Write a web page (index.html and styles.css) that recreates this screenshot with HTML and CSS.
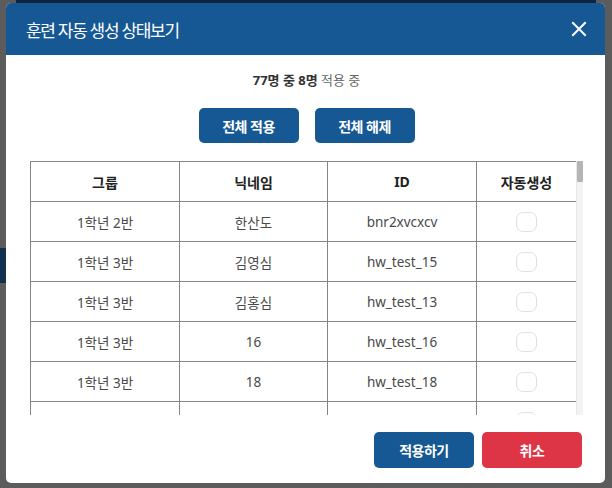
FILE: index.html
```html
<!DOCTYPE html>
<html lang="ko">
<head>
<meta charset="utf-8">
<title>훈련 자동 생성 상태보기</title>
<link rel="stylesheet" href="styles.css">
</head>
<body>
<div class="page">
  <div class="page-top"></div>
  <div class="page-side"></div>
</div>
<div class="modal">
  <div class="modal-header">
    <h1 class="modal-title">훈련 자동 생성 상태보기</h1>
    <button class="close" aria-label="닫기">
      <svg width="16" height="16" viewBox="0 0 16 16"><path d="M2 2 L14 14 M14 2 L2 14" stroke="#fff" stroke-width="2" stroke-linecap="square" fill="none"/></svg>
    </button>
  </div>
  <div class="modal-body">
    <p class="summary"><b>77명 중 8명</b> 적용 중</p>
    <div class="actions">
      <button class="btn btn-blue">전체 적용</button>
      <button class="btn btn-blue">전체 해제</button>
    </div>
    <div class="table-area">
      <div class="table-wrap">
        <table class="grid">
          <colgroup>
            <col class="c-group"><col class="c-nick"><col class="c-id"><col class="c-auto">
          </colgroup>
          <thead>
            <tr><th>그룹</th><th>닉네임</th><th>ID</th><th>자동생성</th></tr>
          </thead>
          <tbody>
            <tr><td>1학년 2반</td><td>한산도</td><td>bnr2xvcxcv</td><td><span class="cb"></span></td></tr>
            <tr><td>1학년 3반</td><td>김영심</td><td>hw_test_15</td><td><span class="cb"></span></td></tr>
            <tr><td>1학년 3반</td><td>김홍심</td><td>hw_test_13</td><td><span class="cb"></span></td></tr>
            <tr><td>1학년 3반</td><td>16</td><td>hw_test_16</td><td><span class="cb"></span></td></tr>
            <tr><td>1학년 3반</td><td>18</td><td>hw_test_18</td><td><span class="cb"></span></td></tr>
            <tr class="partial"><td>1학년 3반</td><td>19</td><td>hw_test_19</td><td><span class="cb"></span></td></tr>
          </tbody>
        </table>
      </div>
      <div class="scrollbar"><div class="thumb"></div></div>
    </div>
  </div>
  <div class="modal-footer">
    <button class="btn btn-blue">적용하기</button>
    <button class="btn btn-red">취소</button>
  </div>
</div>
</body>
</html>
```
FILE: styles.css
```css
* { box-sizing: border-box; }
html, body { margin: 0; padding: 0; }
body {
  width: 612px;
  height: 488px;
  overflow: hidden;
  background: #5c5c5c;
  font-family: "Noto Sans", "Noto Sans CJK KR", sans-serif;
  position: relative;
}
.page { height: 488px; display: flex; flex-direction: column; }
.page-top { height: 14px; margin: 0 16px; background: #0e2440; }
.page-side { margin-top: 234px; width: 8px; height: 35px; background: #12304f; }

.modal {
  position: absolute;
  left: 6px;
  top: 3px;
  width: 599px;
  height: 480px;
  background: #fff;
  border-radius: 5px;
  overflow: hidden;
  display: flex;
  flex-direction: column;
}
.modal-header {
  height: 52px;
  flex: none;
  background: #155894;
  display: flex;
  align-items: center;
  justify-content: space-between;
  padding: 0 18px 0 20px;
}
.modal-title {
  margin: 0;
  color: #fff;
  font-size: 17px;
  font-weight: 400;
  letter-spacing: -1.3px;
}
.close {
  border: 0;
  background: none;
  padding: 0;
  width: 16px;
  height: 16px;
  display: flex;
}
.modal-body {
  flex: 1;
  display: flex;
  flex-direction: column;
  padding: 16px 22px 0 24px;
  min-height: 0;
}
.summary {
  margin: 0;
  text-align: center;
  font-size: 13px;
  line-height: 19px;
  color: #666;
}
.summary b { color: #333; font-weight: 700; }
.actions {
  margin-top: 18px;
  display: flex;
  justify-content: center;
  gap: 16px;
}
.btn {
  width: 100px;
  height: 35px;
  border: 0;
  border-radius: 5px;
  color: #fff;
  font-family: inherit;
  font-size: 14px;
  font-weight: 700;
  letter-spacing: -0.5px;
  padding: 0;
}
.btn-blue { background: #155894; }
.btn-red { background: #dd3546; }

.table-area {
  margin-top: 18px;
  height: 254px;
  display: flex;
}
.table-wrap {
  width: 546px;
  height: 254px;
  overflow: hidden;
}
.scrollbar {
  width: 7px;
  height: 254px;
  background: #f3f3f3;
  border-left: 1px solid #e8e8e8;
}
.thumb {
  height: 21px;
  background: #b5b5b5;
  border-radius: 1px;
}

.grid {
  width: 546px;
  border-collapse: collapse;
  table-layout: fixed;
}
.c-group { width: 149px; }
.c-nick { width: 148px; }
.c-id { width: 149px; }
.c-auto { width: 100px; }
.grid th, .grid td {
  border: 1px solid #858585;
  height: 40px;
  padding: 0;
  text-align: center;
  vertical-align: middle;
}
.grid th {
  font-size: 14px;
  font-weight: 700;
  color: #222;
}
.grid td {
  font-size: 13.5px;
  color: #4a4a4a;
}
.cb {
  display: inline-block;
  width: 21px;
  height: 20px;
  border: 1px solid #e0e0e0;
  border-radius: 7px;
  vertical-align: middle;
}

.modal-footer {
  flex: none;
  display: flex;
  justify-content: flex-end;
  gap: 8px;
  padding: 17px 23px 15px 0;
}
.modal-footer .btn { height: 36px; }
```
